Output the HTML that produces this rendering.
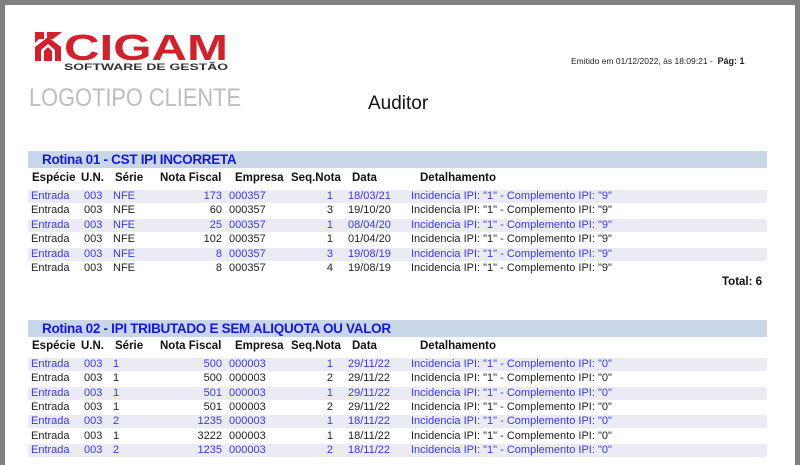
<!DOCTYPE html>
<html><head><meta charset="utf-8"><style>
body{margin:0;width:800px;height:460px;background:#808080;overflow:hidden;position:relative;font-family:"Liberation Sans",sans-serif}
.page{position:absolute;left:5px;top:5px;width:790px;height:460px;background:#fff}
.a{position:absolute;white-space:nowrap}
.band{position:absolute;left:28px;width:739px;background:#c8d6e8;height:17px}
.title{position:absolute;left:42px;font-weight:bold;font-size:13.5px;color:#1616e6;line-height:17px;letter-spacing:-0.3px}
.hdr{position:absolute;font-weight:bold;font-size:11.5px;color:#111;line-height:14px}
.row{position:absolute;left:28px;width:739px;height:13px;font-size:11px;line-height:13px;color:#222}
.row.b{background:#ebebf5;color:#3a3aee}
.row span{position:absolute;top:0}
.r{text-align:right}
</style></head><body>
<div class="page"></div>
<svg class="a" style="left:34px;top:30px" width="196" height="44" viewBox="0 0 196 44">
<g fill="#d4202a">
<polygon points="1,2 10,2 10,9 5,9 1,13"/>
<polygon points="13,2 28,2 19,9 13,9"/>
<polygon points="1,17 14,7 27,17 27,31 21,31 21,20 14,14 7,20 7,31 1,31"/>
<polygon points="10,21 14,17 18,21 18,31 10,31"/>
</g>
<text x="30" y="30" font-family="Liberation Sans" font-weight="bold" font-size="36" fill="#d4202a" textLength="164" lengthAdjust="spacingAndGlyphs">CIGAM</text>
<text x="30" y="40" font-family="Liberation Sans" font-weight="bold" font-size="9" fill="#333" textLength="164" lengthAdjust="spacingAndGlyphs">SOFTWARE DE GESTÃO</text>
</svg>
<svg class="a" style="left:28px;top:82px" width="216" height="30"><text x="1" y="24" font-family="Liberation Sans" font-size="25" fill="#bdbdbd" textLength="212" lengthAdjust="spacingAndGlyphs">LOGOTIPO CLIENTE</text></svg>
<div class="a" style="left:571px;top:56px;font-size:8.5px;color:#222">Emitido em 01/12/2022, às 18:09:21 - &nbsp;<b style="font-size:9px">Pág: 1</b></div>
<div class="a" style="left:368px;top:93px;font-size:19px;color:#111">Auditor</div>

<div class="band" style="top:151px"></div>
<div class="title" style="top:151px">Rotina 01 - CST IPI INCORRETA</div>
<div class="hdr" style="top:171px;left:32px">Espécie</div>
<div class="hdr" style="top:171px;left:81px">U.N.</div>
<div class="hdr" style="top:171px;left:115px">Série</div>
<div class="hdr" style="top:171px;left:160px">Nota Fiscal</div>
<div class="hdr" style="top:171px;left:235px">Empresa</div>
<div class="hdr" style="top:171px;left:291px">Seq.Nota</div>
<div class="hdr" style="top:171px;left:352px">Data</div>
<div class="hdr" style="top:171px;left:420px">Detalhamento</div>

<div class="row b" style="top:190px"><span style="left:3px">Entrada</span><span style="left:56px">003</span><span style="left:85px">NFE</span><span class="r" style="right:545px">173</span><span style="left:201px">000357</span><span class="r" style="right:434px">1</span><span style="left:320px">18/03/21</span><span style="left:383px">Incidencia IPI: "1" - Complemento IPI: "9"</span></div>
<div class="row" style="top:204px"><span style="left:3px">Entrada</span><span style="left:56px">003</span><span style="left:85px">NFE</span><span class="r" style="right:545px">60</span><span style="left:201px">000357</span><span class="r" style="right:434px">3</span><span style="left:320px">19/10/20</span><span style="left:383px">Incidencia IPI: "1" - Complemento IPI: "9"</span></div>
<div class="row b" style="top:219px"><span style="left:3px">Entrada</span><span style="left:56px">003</span><span style="left:85px">NFE</span><span class="r" style="right:545px">25</span><span style="left:201px">000357</span><span class="r" style="right:434px">1</span><span style="left:320px">08/04/20</span><span style="left:383px">Incidencia IPI: "1" - Complemento IPI: "9"</span></div>
<div class="row" style="top:233px"><span style="left:3px">Entrada</span><span style="left:56px">003</span><span style="left:85px">NFE</span><span class="r" style="right:545px">102</span><span style="left:201px">000357</span><span class="r" style="right:434px">1</span><span style="left:320px">01/04/20</span><span style="left:383px">Incidencia IPI: "1" - Complemento IPI: "9"</span></div>
<div class="row b" style="top:248px"><span style="left:3px">Entrada</span><span style="left:56px">003</span><span style="left:85px">NFE</span><span class="r" style="right:545px">8</span><span style="left:201px">000357</span><span class="r" style="right:434px">3</span><span style="left:320px">19/08/19</span><span style="left:383px">Incidencia IPI: "1" - Complemento IPI: "9"</span></div>
<div class="row" style="top:262px"><span style="left:3px">Entrada</span><span style="left:56px">003</span><span style="left:85px">NFE</span><span class="r" style="right:545px">8</span><span style="left:201px">000357</span><span class="r" style="right:434px">4</span><span style="left:320px">19/08/19</span><span style="left:383px">Incidencia IPI: "1" - Complemento IPI: "9"</span></div>
<div class="a" style="left:722px;top:276px;font-weight:bold;font-size:11.5px;color:#111">Total: 6</div>

<div class="band" style="top:320px"></div>
<div class="title" style="top:320px">Rotina 02 - IPI TRIBUTADO E SEM ALIQUOTA OU VALOR</div>
<div class="hdr" style="top:339px;left:32px">Espécie</div>
<div class="hdr" style="top:339px;left:81px">U.N.</div>
<div class="hdr" style="top:339px;left:115px">Série</div>
<div class="hdr" style="top:339px;left:160px">Nota Fiscal</div>
<div class="hdr" style="top:339px;left:235px">Empresa</div>
<div class="hdr" style="top:339px;left:291px">Seq.Nota</div>
<div class="hdr" style="top:339px;left:352px">Data</div>
<div class="hdr" style="top:339px;left:420px">Detalhamento</div>

<div class="row b" style="top:358px"><span style="left:3px">Entrada</span><span style="left:56px">003</span><span style="left:85px">1</span><span class="r" style="right:545px">500</span><span style="left:201px">000003</span><span class="r" style="right:434px">1</span><span style="left:320px">29/11/22</span><span style="left:383px">Incidencia IPI: "1" - Complemento IPI: "0"</span></div>
<div class="row" style="top:372px"><span style="left:3px">Entrada</span><span style="left:56px">003</span><span style="left:85px">1</span><span class="r" style="right:545px">500</span><span style="left:201px">000003</span><span class="r" style="right:434px">2</span><span style="left:320px">29/11/22</span><span style="left:383px">Incidencia IPI: "1" - Complemento IPI: "0"</span></div>
<div class="row b" style="top:387px"><span style="left:3px">Entrada</span><span style="left:56px">003</span><span style="left:85px">1</span><span class="r" style="right:545px">501</span><span style="left:201px">000003</span><span class="r" style="right:434px">1</span><span style="left:320px">29/11/22</span><span style="left:383px">Incidencia IPI: "1" - Complemento IPI: "0"</span></div>
<div class="row" style="top:401px"><span style="left:3px">Entrada</span><span style="left:56px">003</span><span style="left:85px">1</span><span class="r" style="right:545px">501</span><span style="left:201px">000003</span><span class="r" style="right:434px">2</span><span style="left:320px">29/11/22</span><span style="left:383px">Incidencia IPI: "1" - Complemento IPI: "0"</span></div>
<div class="row b" style="top:415px"><span style="left:3px">Entrada</span><span style="left:56px">003</span><span style="left:85px">2</span><span class="r" style="right:545px">1235</span><span style="left:201px">000003</span><span class="r" style="right:434px">1</span><span style="left:320px">18/11/22</span><span style="left:383px">Incidencia IPI: "1" - Complemento IPI: "0"</span></div>
<div class="row" style="top:430px"><span style="left:3px">Entrada</span><span style="left:56px">003</span><span style="left:85px">1</span><span class="r" style="right:545px">3222</span><span style="left:201px">000003</span><span class="r" style="right:434px">1</span><span style="left:320px">18/11/22</span><span style="left:383px">Incidencia IPI: "1" - Complemento IPI: "0"</span></div>
<div class="row b" style="top:444px"><span style="left:3px">Entrada</span><span style="left:56px">003</span><span style="left:85px">2</span><span class="r" style="right:545px">1235</span><span style="left:201px">000003</span><span class="r" style="right:434px">2</span><span style="left:320px">18/11/22</span><span style="left:383px">Incidencia IPI: "1" - Complemento IPI: "0"</span></div>
</body></html>
